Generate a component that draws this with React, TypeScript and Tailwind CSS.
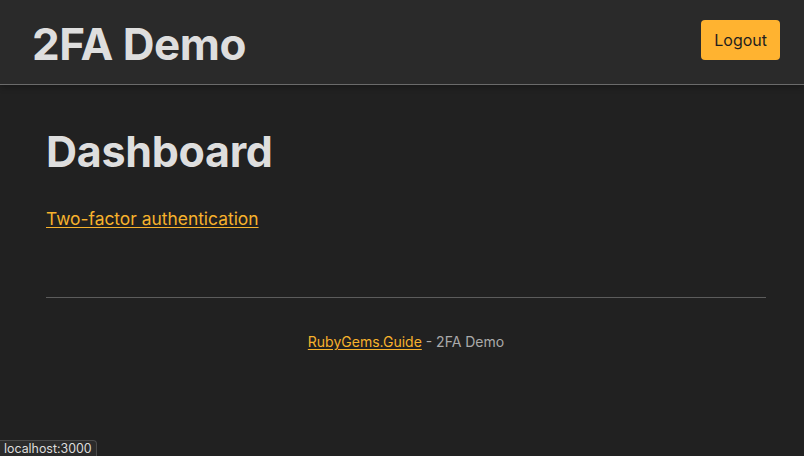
import React from 'react';

export default function App() {
  return (
    <div className="relative min-h-[456px] bg-[#212121] font-['Inter',_'Liberation_Sans',_sans-serif] text-[#dddddd]">
      <header className="flex h-[85px] items-start justify-between border-b border-[#6b6b6b] bg-[#2a2a2a] pl-8 pr-6 pt-5 shadow-[0_2px_6px_rgba(0,0,0,0.3)]">
        <h1 className="mt-[2px] text-[44px] font-bold leading-none tracking-[-0.5px] text-[#dedede]">2FA Demo</h1>
        <button className="h-10 rounded bg-[#ffb330] px-[13px] text-base text-[#1f1f1f]">Logout</button>
      </header>

      <main className="pl-[46px] pr-[38px] pt-[42px]">
        <h2 className="text-[43px] font-bold leading-[48px] tracking-[-0.3px] text-[#dedede]">Dashboard</h2>
        <p className="mt-[31px]">
          <a href="#" className="text-[17.4px] text-[#f7b22c] underline underline-offset-2">
            Two-factor authentication
          </a>
        </p>

        <hr className="mt-[65px] border-t border-[#5c5c5c]" />

        <footer className="pt-[34px] text-center text-sm text-[#aaaaaa]">
          <a href="#" className="text-[#f7b22c] underline underline-offset-2">RubyGems.Guide</a> - 2FA Demo
        </footer>
      </main>

      <div className="absolute bottom-0 left-0 rounded-tr border-t border-r border-[#4a4a4a] bg-[#2b2b2b] px-1 pt-px text-[12.4px] leading-[14px] text-[#dddddd]">
        localhost:3000
      </div>
    </div>
  );
}
